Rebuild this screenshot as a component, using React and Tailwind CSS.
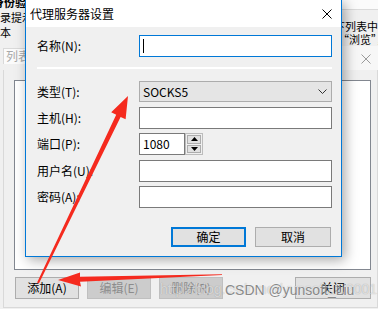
export default function App() {
  const Btn = ({ children, className = "" }) => (
    <div className={"flex items-center justify-center h-full border " + className}>{children}</div>
  );
  const Input = ({ children, className = "" }) => (
    <div className={"w-[193px] h-full bg-white border border-[#7a7a7a] flex items-center pl-[3px] " + className}>{children}</div>
  );
  return (
    <div className="relative w-[378px] h-[309px] overflow-hidden bg-[#f0f0f0] text-black text-[12px] [font-family:'Noto_Sans_CJK_SC',sans-serif]">
      {/* background window */}
      <div className="flex flex-col">
        <div className="flex justify-between h-[46px]">
          <div className="w-[25px] overflow-hidden text-[11px] leading-[15px] whitespace-nowrap">
            <div className="-mt-[5px] -ml-[7px] font-bold">身份验证</div>
            <div>录提示信息</div>
            <div>本</div>
          </div>
          <div className="w-[37px] flex flex-col">
            <div className="h-[10px] bg-[#fbfbfb] border-b border-[#dadada]" />
            <div className="h-[35px] overflow-hidden whitespace-nowrap text-[11px] leading-[13px] pt-[10px]">
              <div className="-ml-[7px]">下列表中</div>
              <div className="-ml-[3px]">“浏览”，</div>
            </div>
          </div>
        </div>
        <div className="flex justify-between h-[24px]">
          <div className="ml-[3px] mt-[2px] h-[16px] w-[30px] pl-[2px] bg-[#fbfbfb] border border-b-0 border-[#d9d9d9] text-[#a8a8a8] text-[12px] leading-[14px] overflow-hidden whitespace-nowrap">列表框</div>
          <div className="w-[37px] bg-[#f7f7f7] flex items-center justify-end pr-[7px] pt-[2px]">
            <svg width="10" height="10" viewBox="0 0 10 10"><path d="M0.5 0.5L9.5 9.5M9.5 0.5L0.5 9.5" stroke="#9a9a9a" strokeWidth="1" /></svg>
          </div>
        </div>
        <div className="ml-[3px] w-[375px] border-x border-b border-[#d9d9d9] pt-[10px] pl-[10px] pr-[6px] pb-[8px]">
          <div className="h-[190px] bg-white border border-[#828790]" />
          <div className="mt-[7px] ml-[1px] flex gap-[8px] h-[22px]">
            <div className="w-[64px] h-full"><Btn className="bg-[#e1e1e1] border-[#adadad]">添加(A)</Btn></div>
            <div className="w-[64px] h-full"><Btn className="bg-[#cccccc] border-[#bfbfbf] text-[#8c8c8c]">编辑(E)</Btn></div>
            <div className="w-[64px] h-full"><Btn className="bg-[#cccccc] border-[#bfbfbf] text-[#8c8c8c]">删除(R)</Btn></div>
            <div className="ml-auto w-[76px] h-full"><Btn className="bg-[#e1e1e1] border-[#adadad]">关闭</Btn></div>
          </div>
        </div>
      </div>

      {/* dialog */}
      <div className="absolute left-[25px] top-0 w-[317px] bg-[#f0f0f0] border-x border-b border-[#0078d7] shadow-[3px_3px_12px_rgba(0,0,0,0.35)]">
        <div className="h-[27px] bg-white flex items-center justify-between pl-[4px] pr-[9px]">
          <span className="leading-none">代理服务器设置</span>
          <svg width="10" height="10" viewBox="0 0 10 10"><path d="M0.5 0.5L9.5 9.5M9.5 0.5L0.5 9.5" stroke="#000" strokeWidth="1" /></svg>
        </div>
        <div className="pl-[11px] pr-[9px] pt-[8px] pb-[9px] flex flex-col">
          <div className="flex items-center h-[22px]">
            <div className="w-[102px]">名称(N):</div>
            <Input className="border-[#0078d7]"><div className="w-[1px] h-[14px] bg-black" /></Input>
          </div>
          <div className="mt-[10px] w-[295px] h-[2px] border-t border-[#a0a0a0] border-b border-white" />
          <div className="mt-[12px] flex items-center h-[21px]">
            <div className="w-[102px]">类型(T):</div>
            <div className="w-[193px] h-full bg-[#e5e5e5] border border-[#acacac] flex items-center justify-between pl-[3px] pr-[4px]">
              <span>SOCKS5</span>
              <svg width="9" height="5" viewBox="0 0 9 5"><path d="M0.5 0.5L4.5 4.5L8.5 0.5" fill="none" stroke="#333" strokeWidth="1" /></svg>
            </div>
          </div>
          <div className="mt-[5px] flex items-center h-[22px]">
            <div className="w-[102px]">主机(H):</div>
            <Input />
          </div>
          <div className="mt-[4px] flex items-center h-[22px]">
            <div className="w-[102px]">端口(P):</div>
            <div className="w-[46px] h-full bg-white border border-[#7a7a7a] flex items-center pl-[3px]">1080</div>
            <div className="w-[18px] h-full border border-[#bcbcbc] p-[1px] flex flex-col gap-[1px]">
              <div className="flex-1 bg-[#e1e1e1] border border-[#adadad] flex items-center justify-center">
                <svg width="7" height="4" viewBox="0 0 7 4"><path d="M0 4L3.5 0L7 4Z" fill="#000" /></svg>
              </div>
              <div className="flex-1 bg-[#e1e1e1] border border-[#adadad] flex items-center justify-center">
                <svg width="7" height="4" viewBox="0 0 7 4"><path d="M0 0L3.5 4L7 0Z" fill="#000" /></svg>
              </div>
            </div>
          </div>
          <div className="mt-[5px] flex items-center h-[22px]">
            <div className="w-[102px]">用户名(U):</div>
            <Input />
          </div>
          <div className="mt-[4px] flex items-center h-[22px]">
            <div className="w-[102px]">密码(A):</div>
            <Input />
          </div>
          <div className="mt-[19px] h-[20px] flex justify-end gap-[9px] mr-[1px]">
            <div className="w-[75px] h-full"><Btn className="bg-[#e1e1e1] border-2 border-[#0078d7]">确定</Btn></div>
            <div className="w-[76px] h-full"><Btn className="bg-[#e1e1e1] border-[#adadad]">取消</Btn></div>
          </div>
        </div>
      </div>

      {/* watermark */}
      <div className="absolute left-[160px] top-[279px] text-[14px] whitespace-nowrap text-[rgba(255,255,255,0.6)] [text-shadow:0_0_1px_rgba(0,0,0,0.3)] [font-family:'Liberation_Sans',sans-serif]">http://blog.csdn.net/yunsoftLiu2001</div>
      <div className="absolute left-[225px] top-[280px] text-[14px] whitespace-nowrap text-[rgba(90,90,90,0.7)] [text-shadow:0_0_2px_rgba(255,255,255,0.9)] [font-family:'Liberation_Sans',sans-serif]">CSDN @yunsoft_Liu</div>

      {/* red arrows */}
      <svg className="absolute left-0 top-0 pointer-events-none" width="378" height="309" viewBox="0 0 378 309">
        <polygon points="128,96 125.6,119.3 120.6,116.9 38.9,283.4 37.1,282.6 116.2,114.7 111.2,112.3" fill="#f52a1e" />
        <polygon points="58,280 80,272.5 80,276.8 222,274.2 222,275 80,281.8 81,286.5" fill="#f52a1e" />
      </svg>
    </div>
  );
}
